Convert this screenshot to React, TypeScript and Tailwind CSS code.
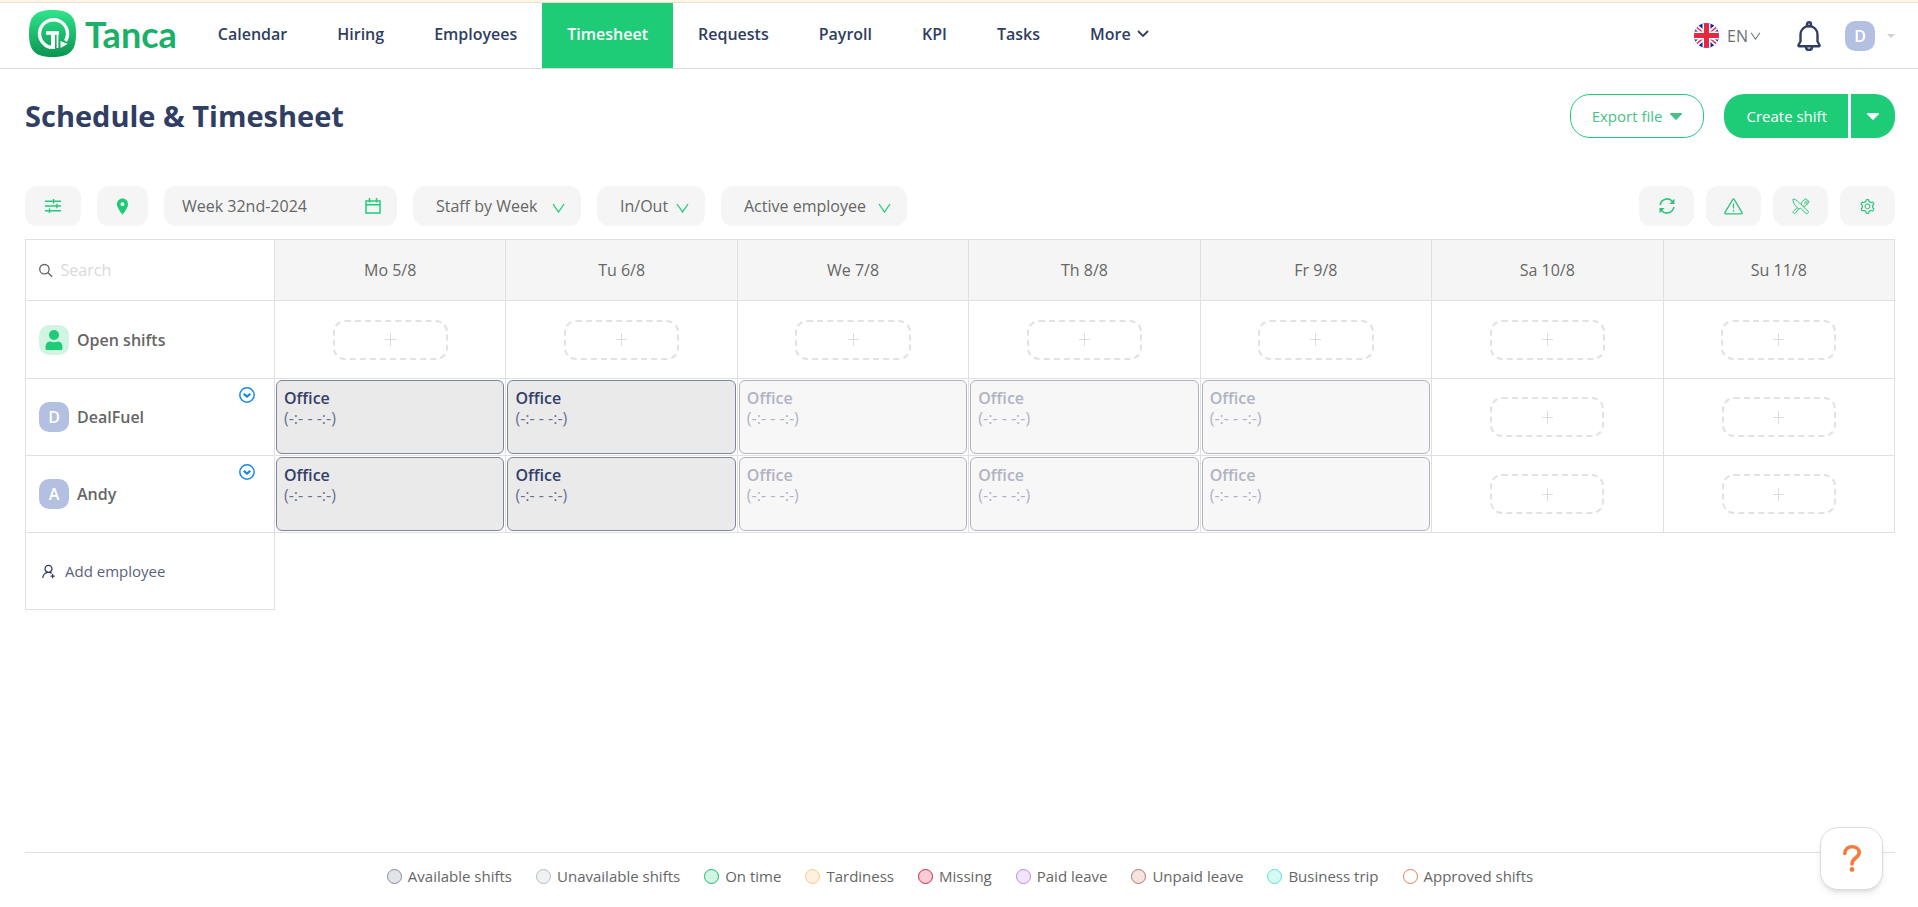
import { useState } from "react";
import { MdLocationOn } from "react-icons/md";
import { AiOutlineSetting, AiOutlineUserAdd } from "react-icons/ai";

const navItems = ["Calendar", "Hiring", "Employees", "Timesheet", "Requests", "Payroll", "KPI", "Tasks"];
const days = ["Mo 5/8", "Tu 6/8", "We 7/8", "Th 8/8", "Fr 9/8", "Sa 10/8", "Su 11/8"];
const employees = [
    { name: "DealFuel", initial: "D" },
    { name: "Andy", initial: "A" },
];
const legend = [
    { label: "Available shifts", dot: "border-[#8a8d9c] bg-[#e3e4e9]" },
    { label: "Unavailable shifts", dot: "border-[#b9bbc6] bg-[#f0f1f3]" },
    { label: "On time", dot: "border-[#22b573] bg-[#d0f5e2]" },
    { label: "Tardiness", dot: "border-[#f5c98a] bg-[#fef1de]" },
    { label: "Missing", dot: "border-[#d3244f] bg-[#fbccd4]" },
    { label: "Paid leave", dot: "border-[#b78af0] bg-[#f1e6fd]" },
    { label: "Unpaid leave", dot: "border-[#b5736c] bg-[#f3e4e2]" },
    { label: "Business trip", dot: "border-[#5ce0cc] bg-[#d5fbf3]" },
    { label: "Approved shifts", dot: "border-[#e07f50] bg-white" },
];

const Logo = () => (
    <svg width="47" height="47" viewBox="0 0 47 47" aria-hidden="true">
        <defs>
            <linearGradient id="logo-bg" x1="0" y1="0" x2="0" y2="1">
                <stop offset="0" stopColor="#2fe58c" />
                <stop offset="1" stopColor="#0b9450" />
            </linearGradient>
        </defs>
        <path d="M23.500 0C41 0 47 6 47 23.500S41 47 23.500 47 0 41 0 23.500 6 0 23.500 0Z" fill="url(#logo-bg)" />
        <path d="M22 37.500A14 14 0 1 1 36.500 31" fill="none" stroke="#fff" strokeWidth="3.400" />
        <path d="M17 23h13" stroke="#fff" strokeWidth="3.600" />
        <path d="M24 22v17" stroke="#fff" strokeWidth="4" />
        <path d="M28.500 25v13" stroke="#fff" strokeWidth="1.800" />
        <path d="M31.500 31v7l7-4Z" fill="#fff" />
    </svg>
);

const Flag = () => (
    <svg width="25" height="25" viewBox="0 0 25 25" aria-hidden="true">
        <clipPath id="flag-clip"><circle cx="12.500" cy="12.500" r="12.500" /></clipPath>
        <g clipPath="url(#flag-clip)">
            <path d="M0 0h25v25H0Z" fill="#1c1f9c" />
            <path d="M0 2l25 21M25 2L0 23" stroke="#fff" strokeWidth="5" />
            <path d="M0 2l25 21M25 2L0 23" stroke="#e5304c" strokeWidth="1.500" />
            <path d="M12.500 0v25M0 12.500h25" stroke="#fff" strokeWidth="8" />
            <path d="M12.500 0v25M0 12.500h25" stroke="#e5273f" strokeWidth="5" />
        </g>
    </svg>
);

const Bell = () => (
    <svg width="24" height="30" viewBox="0 0 24 30" fill="none" stroke="#2f3e62" strokeWidth="2.400" strokeLinejoin="round">
        <path d="M3.500 20.500v-7a8.500 8.500 0 0 1 17 0v7l2 3.500c.3.800 0 1.300-.8 1.300H2.300c-.8 0-1.100-.5-.8-1.300Z" />
        <circle cx="12" cy="3.200" r="2" />
        <path d="M9 26c0 2 1.300 3 3 3s3-1 3-3" />
    </svg>
);

const ThinChevron = ({ className }: { className: string }) => (
    <svg viewBox="0 0 13 10" fill="none" stroke="currentColor" strokeWidth="1.300" className={className}>
        <path d="M1 1l5.500 8L12 1" />
    </svg>
);

const Caret = () => (
    <svg width="12" height="7" viewBox="0 0 12 7" fill="currentColor">
        <path d="M.7 0h10.600c.7 0 .9.700.5 1.200L6.700 6.600a1 1 0 0 1-1.400 0L.2 1.200C-.2.700 0 0 .7 0Z" />
    </svg>
);

const SlidersIcon = () => (
    <svg width="16" height="14" viewBox="0 0 16 14" fill="none" stroke="currentColor" strokeWidth="1.400">
        <path d="M0 2.200h16M0 7h16M0 11.800h16M8.500 0v4.400M12 4.800v4.400M4.500 9.600V14" />
    </svg>
);

const CalendarIcon = () => (
    <svg width="16" height="16" viewBox="0 0 16 16" fill="none" stroke="currentColor" strokeWidth="1.500">
        <path d="M1 3h14v12H1ZM1 6.700h14M4.500 0v4.500M11.500 0v4.500" />
    </svg>
);

const RefreshIcon = () => (
    <svg width="16" height="16" viewBox="0 0 16 16" fill="none" stroke="currentColor" strokeWidth="1.600">
        <path d="M1.200 7A7 7 0 0 1 13.500 3.500M14.800 9A7 7 0 0 1 2.500 12.500" />
        <path d="M15.500.8V6h-5.200ZM.5 15.200V10h5.200Z" fill="currentColor" stroke="none" />
    </svg>
);

const WarningIcon = () => (
    <svg width="19" height="17" viewBox="0 0 19 17" fill="none" stroke="currentColor" strokeWidth="1.300" strokeLinejoin="round">
        <path d="M8.800 1.300.9 14.700c-.3.600 0 1.200.7 1.200h15.800c.7 0 1-.6.700-1.200L10.200 1.300c-.3-.6-1.100-.6-1.400 0Z" />
        <path d="M9.500 5.500v5M9.500 12v1.600" />
    </svg>
);

const UtensilsIcon = () => (
    <svg width="18" height="17" viewBox="0 0 18 17" fill="none" stroke="currentColor" strokeLinejoin="round">
        <path d="M1 1c2 .2 4 1.400 5.500 3l9.700 9.300c1 1-1 3.200-2.200 2.200L8.600 10.300 7 11C3.500 8.500.8 5 1 1Z" />
        <path d="M6.700 10.800l-3.400 4.400c-1 1.200-3-.7-1.900-1.800L5.600 9.200M9.500 6.800c-.3-1.500 0-2.600.9-3.500L13.800.7l3.400 3-2.800 3.500c-.9.900-2 1.200-3.200.9M12 5.400l2.800-2.700M13.200 6.500 16 3.300" />
    </svg>
);

const DownCircleIcon = () => (
    <svg width="16" height="16" viewBox="0 0 16 16" fill="none" stroke="#1a87e8" strokeWidth="1.500">
        <circle cx="8" cy="8" r="7.200" />
        <path d="M4.700 6.800 8 9.600l3.300-2.800" strokeWidth="2.200" />
    </svg>
);

const PersonIcon = () => (
    <svg width="18" height="20" viewBox="0 0 18 20" fill="#1ecc78">
        <circle cx="9" cy="5" r="5" />
        <path d="M4.500 11.500Q9 13 13.500 11.500C16.500 12 17.500 14.500 17.500 18c0 1.400-.5 2-1.800 2H2.300C1 20 .5 19.400.5 18c0-3.500 1-6 4-6.500Z" />
    </svg>
);

const Avatar = ({ initial }: { initial: string }) => (
    <span className="flex size-[30px] shrink-0 items-center justify-center rounded-[10px] bg-[#b4c0e2] text-base font-semibold text-white">
        {initial}
    </span>
);

const FilterSelect = ({ label, value, width }: { label: string; value: string; width: string }) => (
    <div className={"flex h-10 items-center justify-between rounded-xl bg-[#f5f5f5] pr-4 pb-px pl-[23px] " + width}>
        <select aria-label={label} className="appearance-none bg-transparent text-[#666] outline-none">
            <option>{value}</option>
        </select>
        <ThinChevron className="pointer-events-none mt-1 h-[10px] w-[13px] text-[#1ecc78]" />
    </div>
);

const AddShift = () => (
    <button
        aria-label="Add shift"
        className="mx-auto flex h-10 w-1/2 cursor-pointer items-center justify-center rounded-xl border-2 border-dashed border-[#e2e2e2] text-[#dcdcdc]"
    >
        <svg width="11" height="13" viewBox="0 0 11 13" stroke="currentColor">
            <path d="M5.500 0v13M0 6.500h11" />
        </svg>
    </button>
);

const ShiftCard = ({ available }: { available: boolean }) => (
    <div
        className={
            available
                ? "h-[74px] rounded-md border border-[#8285a0] bg-[#eaeaea] px-[7px] pt-[7px] text-[#343f6b]"
                : "h-[74px] rounded-md border border-[#b1b3c3] bg-[#f7f7f7] px-[7px] pt-[7px] text-[#b1b3c3]"
        }
    >
        <p className="leading-5 font-semibold">Office</p>
        <p className={available ? "leading-5 text-[#6b7090]" : "leading-5"}>(-:- - -:-)</p>
    </div>
);

const App = () => {
    const [week, setWeek] = useState("Week 32nd-2024");
    const [search, setSearch] = useState("");

    return (
        <div className="flex min-h-screen flex-col bg-white font-['Open_Sans',sans-serif] text-base text-[#666]">
            <div className="h-[3px] border-b border-[#eadfca] bg-[#fff6e8]" />
            <header className="flex h-[66px] items-center border-b border-[#d9dade] pr-[23px] pl-[29px]">
                <a href="#" className="mr-4 flex items-center gap-[9px] pb-1">
                    <Logo />
                    <span className="font-[Lato,sans-serif] text-4xl leading-10 font-bold text-[#1bb068]">Tanca</span>
                </a>
                <nav className="flex h-full font-semibold text-[#2f3e62]">
                    {navItems.map((item) => (
                        <a
                            key={item}
                            href="#"
                            className={
                                item === "Timesheet"
                                    ? "flex items-center bg-[#1ecc78] px-[25px] pb-1 text-white"
                                    : "flex items-center px-[25px] pb-1"
                            }
                        >
                            {item}
                        </a>
                    ))}
                    <button className="flex cursor-pointer items-center gap-[6px] px-[25px] pb-1">
                        More
                        <svg width="12" height="8" viewBox="0 0 12 8" fill="none" stroke="currentColor" strokeWidth="1.800">
                            <path d="M1 1l5 5 5-5" />
                        </svg>
                    </button>
                </nav>
                <div className="ml-auto flex items-center">
                    <button className="mr-9 flex cursor-pointer items-center gap-2 text-[#6b6f78]">
                        <Flag />
                        <span className="flex items-center gap-[2px]">
                            EN
                            <ThinChevron className="h-2 w-[11px]" />
                        </span>
                    </button>
                    <button aria-label="Notifications" className="mr-6 cursor-pointer">
                        <Bell />
                    </button>
                    <button aria-label="Account" className="flex cursor-pointer items-center gap-3">
                        <Avatar initial="D" />
                        <svg width="8" height="4" viewBox="0 0 8 4" fill="#cdd0d6">
                            <path d="M0 0h8L4 4Z" />
                        </svg>
                    </button>
                </div>
            </header>

            <main className="grow pr-[23px] pl-[25px]">
                <div className="flex items-center pt-[25px] text-[15px]">
                    <h1 className="text-[29px] leading-10 font-bold text-[#2f3e62]">Schedule &amp; Timesheet</h1>
                    <button className="mr-5 ml-auto flex h-11 cursor-pointer items-center gap-2 rounded-[20px] border border-[#1ecc78] px-[21px] text-[#46c285]">
                        Export file
                        <Caret />
                    </button>
                    <div className="flex gap-[3px] text-white">
                        <button className="h-11 cursor-pointer rounded-l-[20px] bg-[#1ecc78] pr-[21px] pl-[22px]">Create shift</button>
                        <button aria-label="More create options" className="flex h-11 w-11 cursor-pointer items-center justify-center rounded-r-[20px] bg-[#1ecc78]">
                            <Caret />
                        </button>
                    </div>
                </div>

                <div className="mt-12 mb-[13px] flex gap-4">
                    <button aria-label="Filters" className="flex h-10 w-14 cursor-pointer items-center justify-center rounded-xl bg-[#f5f5f5] text-[#1ecc78]">
                        <SlidersIcon />
                    </button>
                    <button aria-label="Location" className="flex h-10 w-[51px] cursor-pointer items-center justify-center rounded-xl bg-[#f5f5f5] text-[#1ecc78]">
                        <MdLocationOn size={19} />
                    </button>
                    <label className="flex h-10 w-[233px] items-center justify-between rounded-xl bg-[#f5f5f5] pr-4 pl-[18px] text-[#1ecc78]">
                        <input
                            aria-label="Week"
                            value={week}
                            onChange={(e) => setWeek(e.target.value)}
                            className="w-40 bg-transparent text-[#666] outline-none"
                        />
                        <CalendarIcon />
                    </label>
                    <FilterSelect label="View" value="Staff by Week" width="w-[168px]" />
                    <FilterSelect label="Display" value="In/Out" width="w-[108px]" />
                    <FilterSelect label="Employee status" value="Active employee" width="w-[186px]" />
                    <div className="ml-auto flex gap-3 text-[#2fc27c]">
                        <button aria-label="Refresh" className="flex h-10 w-[55px] cursor-pointer items-center justify-center rounded-xl bg-[#f5f5f5]">
                            <RefreshIcon />
                        </button>
                        <button aria-label="Warnings" className="flex h-10 w-[55px] cursor-pointer items-center justify-center rounded-xl bg-[#f5f5f5]">
                            <WarningIcon />
                        </button>
                        <button aria-label="Meals" className="flex h-10 w-[55px] cursor-pointer items-center justify-center rounded-xl bg-[#f5f5f5]">
                            <UtensilsIcon />
                        </button>
                        <button aria-label="Settings" className="flex h-10 w-[55px] cursor-pointer items-center justify-center rounded-xl bg-[#f5f5f5]">
                            <AiOutlineSetting size={17} />
                        </button>
                    </div>
                </div>

                <table className="w-full table-fixed border-collapse">
                    <thead>
                        <tr className="h-[61px]">
                            <th className="w-[249px] border border-[#dfe0e2] px-[13px] font-normal">
                                <label className="flex items-center gap-2">
                                    <svg width="15" height="15" viewBox="0 0 15 15" fill="none" stroke="#666" strokeWidth="1.500">
                                        <circle cx="6" cy="6" r="5.200" />
                                        <path d="M9.800 9.800l4.700 4.700" />
                                    </svg>
                                    <input
                                        aria-label="Search"
                                        placeholder="Search"
                                        value={search}
                                        onChange={(e) => setSearch(e.target.value)}
                                        className="w-full bg-transparent outline-none placeholder:text-[#d9d9d9]"
                                    />
                                </label>
                            </th>
                            {days.map((day) => (
                                <th key={day} className="border border-[#dfe0e2] bg-[#f5f5f5] font-normal">
                                    {day}
                                </th>
                            ))}
                        </tr>
                    </thead>
                    <tbody>
                        <tr className="h-[78px]">
                            <td className="border border-[#dfe0e2] px-[13px]">
                                <div className="flex items-center gap-2">
                                    <span className="flex size-[30px] items-center justify-center rounded-[10px] bg-[#d0f5e2]">
                                        <PersonIcon />
                                    </span>
                                    <span className="font-semibold">Open shifts</span>
                                </div>
                            </td>
                            {days.map((day) => (
                                <td key={day} className="border border-[#dfe0e2]">
                                    <AddShift />
                                </td>
                            ))}
                        </tr>
                        {employees.map((employee) => (
                            <tr key={employee.name} className="h-[77px]">
                                <td className="relative border border-[#dfe0e2] px-[13px]">
                                    <div className="flex items-center gap-2">
                                        <Avatar initial={employee.initial} />
                                        <span className="font-semibold">{employee.name}</span>
                                    </div>
                                    <button aria-label={"Show " + employee.name} className="absolute top-2 right-[19px] cursor-pointer">
                                        <DownCircleIcon />
                                    </button>
                                </td>
                                {days.map((day, i) => (
                                    <td key={day} className="border border-[#dfe0e2] px-px">
                                        {i < 5 ? <ShiftCard available={i < 2} /> : <AddShift />}
                                    </td>
                                ))}
                            </tr>
                        ))}
                        <tr className="h-[77px]">
                            <td className="border border-[#dfe0e2] px-[14px]">
                                <button className="flex cursor-pointer items-center gap-2 text-[15px] text-[#5a5f80]">
                                    <AiOutlineUserAdd size={17} className="text-[#2f3e62]" />
                                    Add employee
                                </button>
                            </td>
                        </tr>
                    </tbody>
                </table>
            </main>

            <footer className="mr-[23px] ml-[25px] flex h-[55px] justify-center gap-6 border-t border-[#dfe0e2] pt-3 text-[15px]">
                {legend.map((item) => (
                    <div key={item.label} className="flex h-[22px] items-center gap-[6px]">
                        <span className={"size-[15px] rounded-full border " + item.dot} />
                        {item.label}
                    </div>
                ))}
            </footer>

            <button
                aria-label="Help"
                className="fixed right-[35px] bottom-[17px] flex size-[63px] cursor-pointer items-center justify-center rounded-[18px] border border-[#dcdcdc] bg-white shadow-md"
            >
                <svg width="18" height="27" viewBox="0 0 18 27" fill="none" stroke="#f57c3f" strokeWidth="3.600">
                    <path d="M1.800 8.500C1.800 4.200 4.800 1.800 9 1.800s7.200 2.400 7.200 6c0 5-7.200 5-7.200 11.200" strokeLinecap="round" />
                    <circle cx="9" cy="24.500" r="2.400" fill="#f57c3f" stroke="none" />
                </svg>
            </button>
        </div>
    );
};

export default App;
